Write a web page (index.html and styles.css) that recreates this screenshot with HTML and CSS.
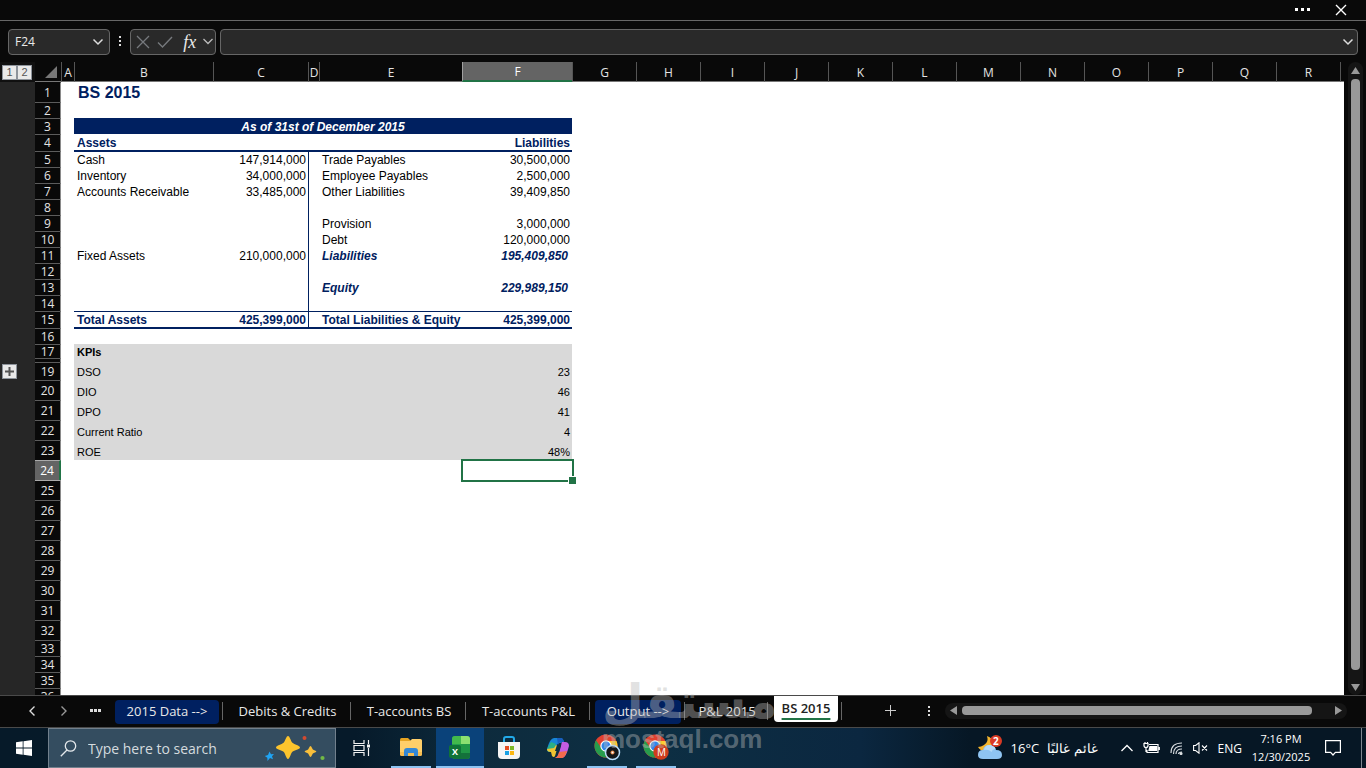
FILE: index.html
```html
<!DOCTYPE html>
<html lang="en">
<head>
<meta charset="utf-8">
<title>BS 2015</title>
<link rel="stylesheet" href="styles.css">
</head>
<body>
<header class="titlebar">
  <button class="plain" aria-label="More options"><svg width="16" height="4" fill="#fff"><rect width="3" height="3" x="0"/><rect width="3" height="3" x="6"/><rect width="3" height="3" x="12"/></svg></button>
  <button class="plain" aria-label="Close"><svg width="12" height="12" stroke="#fff" stroke-width="1.4"><path d="M1 1l10 10M11 1L1 11"/></svg></button>
</header>

<section class="formula-bar">
  <div class="name-box">
    <input type="text" value="F24" aria-label="Name box">
    <button class="plain" aria-label="Open names"><svg width="12" height="8" fill="none" stroke="#ddd" stroke-width="1.5"><path d="M1.500 1.500l4.500 4.500 4.500-4.500"/></svg></button>
  </div>
  <svg class="grip" width="3" height="12" fill="#ddd"><rect width="2" height="2"/><rect y="4" width="2" height="2"/><rect y="8" width="2" height="2"/></svg>
  <div class="fx-box">
    <button class="plain" aria-label="Cancel"><svg width="14" height="14" stroke="#76797d" stroke-width="1.3"><path d="M1 1l12 12M13 1L1 13"/></svg></button>
    <button class="plain" aria-label="Enter"><svg width="16" height="12" fill="none" stroke="#76797d" stroke-width="1.4"><path d="M1 6.500l4.500 4.500L15 1"/></svg></button>
    <button class="plain fx" aria-label="Insert function">fx</button>
    <button class="plain" aria-label="Function list"><svg width="10" height="7" fill="none" stroke="#bbb" stroke-width="1.300"><path d="M.5 1l4.500 4.500L9.500 1"/></svg></button>
  </div>
  <div class="formula-box">
    <input type="text" aria-label="Formula">
    <button class="plain" aria-label="Expand formula bar"><svg width="12" height="8" fill="none" stroke="#ddd" stroke-width="1.5"><path d="M1.500 1.500l4.500 4.500 4.500-4.500"/></svg></button>
  </div>
</section>

<main class="workspace">
  <div class="sheet">
    <table>
      <colgroup>
        <col class="w-gutter"><col class="w-num"><col class="w-a"><col class="w-b"><col class="w-c"><col class="w-d"><col class="w-e"><col class="w-f">
        <col class="w-g"><col class="w-g"><col class="w-g"><col class="w-g"><col class="w-g"><col class="w-g"><col class="w-g"><col class="w-g"><col class="w-g"><col class="w-g"><col class="w-g"><col class="w-g"><col>
      </colgroup>
      <thead>
        <tr>
          <td class="levels"><div><button class="outline">1</button><button class="outline">2</button></div></td>
          <td class="corner"><svg width="12" height="12" fill="#777"><path d="M12 0v12H0z"/></svg></td>
          <th>A</th><th>B</th><th>C</th><th>D</th><th>E</th><th class="on">F</th><th>G</th><th>H</th><th>I</th><th>J</th><th>K</th><th>L</th><th>M</th><th>N</th><th>O</th><th>P</th><th>Q</th><th>R</th><th></th>
        </tr>
      </thead>
      <tbody>
        <tr class="h20"><td class="gut"></td><th>1</th><td></td><td class="title" colspan="18">BS 2015</td></tr>
        <tr class="h16"><td class="gut"></td><th>2</th><td colspan="19"></td></tr>
        <tr class="h16"><td class="gut"></td><th>3</th><td></td><td class="band" colspan="5">As of 31st of December 2015</td><td colspan="13"></td></tr>
        <tr class="h17 strong under"><td class="gut"></td><th>4</th><td></td><td class="cell">Assets</td><td class="cell"></td><td class="cell"></td><td class="cell"></td><td class="cell num">Liabilities</td><td colspan="13"></td></tr>
        <tr class="h16 over"><td class="gut"></td><th>5</th><td></td><td class="cell">Cash</td><td class="cell num">147,914,000</td><td class="cell split"></td><td class="cell">Trade Payables</td><td class="cell num">30,500,000</td><td colspan="13"></td></tr>
        <tr class="h16"><td class="gut"></td><th>6</th><td></td><td class="cell">Inventory</td><td class="cell num">34,000,000</td><td class="split"></td><td class="cell">Employee Payables</td><td class="cell num">2,500,000</td><td colspan="13"></td></tr>
        <tr class="h16"><td class="gut"></td><th>7</th><td></td><td class="cell">Accounts Receivable</td><td class="cell num">33,485,000</td><td class="split"></td><td class="cell">Other Liabilities</td><td class="cell num">39,409,850</td><td colspan="13"></td></tr>
        <tr class="h16"><td class="gut"></td><th>8</th><td></td><td></td><td></td><td class="split"></td><td colspan="15"></td></tr>
        <tr class="h16"><td class="gut"></td><th>9</th><td></td><td></td><td></td><td class="split"></td><td class="cell">Provision</td><td class="cell num">3,000,000</td><td colspan="13"></td></tr>
        <tr class="h16"><td class="gut"></td><th>10</th><td></td><td></td><td></td><td class="split"></td><td class="cell">Debt</td><td class="cell num">120,000,000</td><td colspan="13"></td></tr>
        <tr class="h16"><td class="gut"></td><th>11</th><td></td><td class="cell">Fixed Assets</td><td class="cell num">210,000,000</td><td class="split"></td><td class="cell sub">Liabilities</td><td class="cell num sub">195,409,850</td><td colspan="13"></td></tr>
        <tr class="h16"><td class="gut"></td><th>12</th><td></td><td></td><td></td><td class="split"></td><td colspan="15"></td></tr>
        <tr class="h16"><td class="gut"></td><th>13</th><td></td><td></td><td></td><td class="split"></td><td class="cell sub">Equity</td><td class="cell num sub">229,989,150</td><td colspan="13"></td></tr>
        <tr class="h16"><td class="gut"></td><th>14</th><td></td><td></td><td></td><td class="split"></td><td colspan="15"></td></tr>
        <tr class="h17 strong under over"><td class="gut"></td><th>15</th><td></td><td class="cell">Total Assets</td><td class="cell num">425,399,000</td><td class="cell split"></td><td class="cell">Total Liabilities &amp; Equity</td><td class="cell num">425,399,000</td><td colspan="13"></td></tr>
        <tr class="h16 over"><td class="gut"></td><th>16</th><td></td><td class="cell" colspan="5"></td><td colspan="13"></td></tr>
        <tr class="h14 kpi"><td class="gut"></td><th>17</th><td></td><td class="cell head" colspan="4">KPIs</td><td class="cell"></td><td colspan="13"></td></tr>
        <tr class="h4 kpi"><td class="gut"></td><th></th><td></td><td class="cell" colspan="5"></td><td colspan="13"></td></tr>
        <tr class="h18 kpi"><td class="gut"><button class="outline" aria-label="Expand group"><svg width="9" height="9" stroke="#555" stroke-width="2"><path d="M4.500 0v9M0 4.500h9"/></svg></button></td><th>19</th><td></td><td class="cell" colspan="4">DSO</td><td class="cell num">23</td><td colspan="13"></td></tr>
        <tr class="h20 kpi"><td class="gut"></td><th>20</th><td></td><td class="cell" colspan="4">DIO</td><td class="cell num">46</td><td colspan="13"></td></tr>
        <tr class="h20 kpi"><td class="gut"></td><th>21</th><td></td><td class="cell" colspan="4">DPO</td><td class="cell num">41</td><td colspan="13"></td></tr>
        <tr class="h20 kpi"><td class="gut"></td><th>22</th><td></td><td class="cell" colspan="4">Current Ratio</td><td class="cell num">4</td><td colspan="13"></td></tr>
        <tr class="h20 kpi"><td class="gut"></td><th>23</th><td></td><td class="cell" colspan="4">ROE</td><td class="cell num">48%</td><td colspan="13"></td></tr>
        <tr class="h20"><td class="gut"></td><th class="on">24</th><td colspan="5"></td><td class="selected"></td><td colspan="13"></td></tr>
        <tr class="h20"><td class="gut"></td><th class="after">25</th><td colspan="19"></td></tr>
        <tr class="h20"><td class="gut"></td><th>26</th><td colspan="19"></td></tr>
        <tr class="h20"><td class="gut"></td><th>27</th><td colspan="19"></td></tr>
        <tr class="h20"><td class="gut"></td><th>28</th><td colspan="19"></td></tr>
        <tr class="h20"><td class="gut"></td><th>29</th><td colspan="19"></td></tr>
        <tr class="h20"><td class="gut"></td><th>30</th><td colspan="19"></td></tr>
        <tr class="h20"><td class="gut"></td><th>31</th><td colspan="19"></td></tr>
        <tr class="h20"><td class="gut"></td><th>32</th><td colspan="19"></td></tr>
        <tr class="h16"><td class="gut"></td><th>33</th><td colspan="19"></td></tr>
        <tr class="h16"><td class="gut"></td><th>34</th><td colspan="19"></td></tr>
        <tr class="h16"><td class="gut"></td><th>35</th><td colspan="19"></td></tr>
        <tr class="h16"><td class="gut"></td><th>36</th><td colspan="19"></td></tr>
      </tbody>
    </table>
  </div>
  <div class="vscroll">
    <svg width="9" height="7" fill="#999"><path d="M4.500 0L9 7H0z"/></svg>
    <div class="thumb"></div>
    <svg width="9" height="7" fill="#999"><path d="M0 0h9L4.500 7z"/></svg>
  </div>
</main>

<nav class="tabbar">
  <div class="tabnav">
    <button class="plain" aria-label="Previous sheet"><svg width="8" height="12" fill="none" stroke="#ddd" stroke-width="1.400"><path d="M6.500 1.500L2 6l4.500 4.500"/></svg></button>
    <button class="plain" aria-label="Next sheet"><svg width="8" height="12" fill="none" stroke="#999" stroke-width="1.400"><path d="M1.500 1.500L6 6l-4.500 4.500"/></svg></button>
    <button class="plain" aria-label="All sheets"><svg width="12" height="3" fill="#ddd"><rect width="3" height="3"/><rect x="4" width="3" height="3"/><rect x="8" width="3" height="3"/></svg></button>
  </div>
  <div class="tabs">
    <button class="tab pill"><span>2015 Data --&gt;</span></button>
    <button class="tab"><span>Debits &amp; Credits</span></button>
    <button class="tab"><span>T-accounts BS</span></button>
    <button class="tab"><span>T-accounts P&amp;L</span></button>
    <button class="tab pill"><span>Output --&gt;</span></button>
    <button class="tab"><span>P&amp;L 2015</span></button>
    <button class="tab active"><span>BS 2015</span></button>
  </div>
  <button class="plain add" aria-label="New sheet"><svg width="13" height="13" stroke="#ccc" stroke-width="1"><path d="M6.500 1v11M1 6.500h11"/></svg></button>
  <svg class="grip" width="3" height="12" fill="#ddd"><rect width="2" height="2"/><rect y="4" width="2" height="2"/><rect y="8" width="2" height="2"/></svg>
  <div class="hscroll">
    <svg width="7" height="9" fill="#999"><path d="M7 0v9L0 4.500z"/></svg>
    <div class="thumb"></div>
    <svg width="7" height="9" fill="#999"><path d="M0 0v9l7-4.500z"/></svg>
  </div>
</nav>

<footer class="taskbar">
  <button class="plain start" aria-label="Start"><svg width="16" height="16" fill="#fff"><path d="M0 2.300L6.700 1.300v6.300H0zM7.500 1.200L16 0v7.600H7.500zM0 8.400h6.700v6.300L0 13.700zM7.500 8.400H16V16l-8.500-1.200z"/></svg></button>
  <label class="search">
    <svg width="17" height="17" fill="none" stroke="#e4e8eb" stroke-width="1.300"><circle cx="10.500" cy="6" r="5.200"/><path d="M7 10L.8 16.200"/></svg>
    <input type="text" placeholder="Type here to search">
    <svg width="62" height="26" viewBox="0 0 62 26"><path fill="#fcc42d" d="M24 1c1.800 0 2.700 5 4.400 6.700S36 10.400 36 12.500s-5.900 2.600-7.600 4.300S25.800 24 24 24s-2.700-5.500-4.400-7.200S12 14.600 12 12.500s5.900-3.100 7.600-4.800S22.200 1 24 1z"/><path fill="#f9bf3b" d="M46.500 11c1.100 0 1.500 2.600 2.400 3.500s3.500 1 3.500 2-2.600 1.100-3.500 2-1.300 3.500-2.400 3.500-1.500-2.600-2.400-3.500-3.500-1-3.500-2 2.600-1.100 3.500-2 1.300-3.500 2.400-3.500z"/><path fill="#1fa4f4" d="M5.500 16.500l1.500 2.800 3-.4-2 2.400 1 3-3-1.200L3.500 26l-.2-3.300L.8 21l3.200-1z"/><circle cx="40.500" cy="3" r="2" fill="#d34a30"/><circle cx="58.500" cy="23" r="2.100" fill="#72b945"/></svg>
  </label>
  <div class="apps">
    <button class="app" aria-label="Task view"><svg width="18" height="18" fill="none" stroke="#f2f2f2" stroke-width="1.200"><path d="M1 1v3.500h10V1M1 17v-3.500h10V17M1 6.500h10v5H1zM15.500 1v4M15.500 9v8"/><path fill="#f2f2f2" stroke="none" d="M14 5.500h3v3h-3z"/></svg></button>
    <button class="app open" aria-label="File Explorer"><svg width="22" height="20"><path fill="#e6a422" d="M0 1.500Q0 0 1.500 0H8l3 3H0z"/><path fill="#ffcf6a" d="M0 3h10l2-2h8.500Q22 1 22 2.500V17H0z"/><path fill="#f6bd52" d="M0 14h22v2.500q0 1.500-1.500 1.500h-19Q0 18 0 16.500z"/><path fill="#3488d5" d="M4 18v-5q0-3 3-3h8q3 0 3 3v5h-4v-3H8v3z"/></svg></button>
    <button class="app open current" aria-label="Excel"><svg width="23" height="24"><rect x="3" y="0" width="18" height="23" rx="3" fill="#21a04b"/><path fill="#8ce070" d="M12 0h6q3 0 3 3v5h-9z"/><path fill="#42b94c" d="M6 0h6v8H3V3q0-3 3-3z"/><path fill="#14713b" d="M3 15h18v5q0 3-3 3H6q-3 0-3-3z"/><path fill="#209746" d="M12 8h9v9h-9z"/><rect x="0" y="9" width="12" height="13" rx="2" fill="#107337"/><text x="3" y="19" class="glyph-s">X</text></svg></button>
    <button class="app" aria-label="Store"><svg width="24" height="24"><path fill="none" stroke="#22a9e8" stroke-width="2" d="M7 6V3q0-2 2-2h6q2 0 2 2v3"/><path fill="#f5f5f5" d="M1 6h22v13q0 4-4 4H5q-4 0-4-4z"/><path fill="#e54d22" d="M8 10h4v4H8z"/><path fill="#7db928" d="M13 10h4v4h-4z"/><path fill="#19a1e5" d="M8 15h4v4H8z"/><path fill="#fdb813" d="M13 15h4v4h-4z"/></svg></button>
    <button class="app" aria-label="Copilot"><svg width="24" height="22"><path fill="#1685d8" d="M8 1h7q2 0 3 4l-4 1q-3 0-4 4l-2 5H4q-3 0-3-3Q4 1 8 1z"/><path fill="#2aaf85" d="M5 5l5 2-3 8H4q-3 0-3-3z"/><path fill="#efc332" d="M1 12l7-1 2-3 2 1-3 10q-1 2-3 0l-1-4q-4 0-4-3z"/><path fill="#c45de2" d="M16 5h3q4 0 4 4-3 12-7 12H9q3-1 4-5l2-7q.5-3 1-4z"/><path fill="#f36b4c" d="M21 14q-2 7-5 7H9q3-1 4-6z"/><path fill="#195dbd" d="M11 1h4q2 0 3 4h-3q-2 0-3 3z"/><path fill="#0d2e42" d="M11 8h4l-2 6H9z"/></svg></button>
    <button class="app open" aria-label="Chrome"><svg width="28" height="28"><circle cx="13" cy="12" r="11.500" fill="#e0412f"/><path fill="#ffce31" d="M13 7h10.400A11.500 11.500 0 0 1 13 23.500L18 15z"/><path fill="#279c4d" d="M13 23.500A11.500 11.500 0 0 1 3 6.300L9 15l4 3 2 1z"/><circle cx="13" cy="12" r="5.700" fill="#fff"/><circle cx="13" cy="12" r="4.500" fill="#3286ea"/><circle cx="19.500" cy="18.500" r="7" fill="#15171a" stroke="#b9ddfb" stroke-width="1.500"/><circle cx="19.500" cy="18.500" r="2" fill="#e88443"/><circle cx="19.500" cy="18.500" r="1" fill="#fff"/></svg></button>
    <button class="app open" aria-label="Chrome profile"><svg width="28" height="28"><circle cx="13" cy="12" r="11.500" fill="#e0412f"/><path fill="#ffce31" d="M13 7h10.400A11.500 11.500 0 0 1 13 23.500L18 15z"/><path fill="#279c4d" d="M13 23.500A11.500 11.500 0 0 1 3 6.300L9 15l4 3 2 1z"/><circle cx="13" cy="12" r="5.700" fill="#fff"/><circle cx="13" cy="12" r="4.500" fill="#3286ea"/><circle cx="19" cy="18" r="7.700" fill="#cf3d1c"/><text x="15" y="22" class="glyph-m">M</text></svg></button>
  </div>
  <div class="tray">
    <button class="plain weather"><svg width="26" height="26"><path fill="#f4b52d" d="M10 1q2 6-3 9-3 2-6 2 3 5 8 4 7-1 7-8 0-5-6-7z"/><path fill="#8fc4f2" d="M6 24q-5 0-5-4 0-5 5-5 1-5 6.500-5t6.500 5q6 0 6 5 0 4-5 4z"/><path fill="#b5daf8" d="M7 15q1-5 5.500-5t6 4q-3 0-4 3-3-3-7.500-2z"/><circle cx="19" cy="6" r="6" fill="#d93a25"/><text x="16" y="10" class="glyph-n">2</text></svg><span>16°C</span><span lang="ar" dir="rtl">غائم غالبًا</span></button>
    <button class="plain" aria-label="Hidden icons"><svg width="12" height="8" fill="none" stroke="#fff" stroke-width="1.300"><path d="M.5 7L6 1.500 11.500 7"/></svg></button>
    <button class="plain" aria-label="Battery"><svg width="17" height="12" fill="none" stroke="#fff" stroke-width="1.200"><path d="M6 2.500h9v8H4V8M16.300 5v3M1 1.500v2q0 2 2 2t2-2v-2zM2 0v1M4.500 0v1M3 5v5"/><path fill="#fff" d="M7 4.500h6.500v4H6z"/></svg></button>
    <button class="plain" aria-label="Network"><svg width="13" height="13" fill="none" stroke="#d5dade" stroke-width="1.200"><path d="M1 11Q1 1 12 1M3.500 12Q3.500 4 12 4M6 12Q6 7 12 7M8.500 12Q8.500 10 12 10"/><circle cx="11" cy="11.500" r="1" fill="#fff"/></svg></button>
    <button class="plain" aria-label="Muted"><svg width="15" height="12" fill="none" stroke="#fff" stroke-width="1.100"><path d="M.6 3.500h2L6 .8v10.400L2.600 8.500h-2zM9 3.500l5 5M14 3.500l-5 5"/></svg></button>
    <button class="plain lang">ENG</button>
    <button class="plain clock"><span>7:16 PM</span><span>12/30/2025</span></button>
    <button class="plain notice" aria-label="Notifications"><svg width="16" height="16" fill="none" stroke="#fff" stroke-width="1.200"><path d="M.6.6h14.800v11.800h-5L8 15l-2.400-2.600h-5z"/></svg></button>
  </div>
</footer>

<div class="watermark"><span class="mark" lang="ar" dir="rtl">مستقل</span><span class="site">mostaql.com</span></div>
</body>
</html>
```
FILE: styles.css
```css
* { box-sizing: border-box; }
body {
  margin: 0;
  height: 100vh;
  display: flex;
  flex-direction: column;
  overflow: hidden;
  background: #090909;
  color: #e8e8e8;
  font: 13px "Open Sans", "Noto Sans", sans-serif;
}
button, input { font: inherit; color: inherit; }
svg { display: block; flex: none; }
.plain, .tab, .app {
  display: flex;
  align-items: center;
  justify-content: center;
  padding: 0;
  border: 0;
  background: none;
}

/* Title and formula bars */
.titlebar {
  flex: none;
  height: 21px;
  display: flex;
  align-items: center;
  justify-content: flex-end;
  gap: 24px;
  padding-right: 19px;
  border-bottom: 1px solid #676767;
}
.formula-bar {
  flex: none;
  height: 41px;
  display: flex;
  align-items: center;
  padding: 0 8px;
}
.name-box, .fx-box, .formula-box {
  height: 26px;
  display: flex;
  align-items: center;
  border: 1px solid #666;
  border-radius: 4px;
  background: #292929;
}
.name-box { width: 102px; padding: 0 5px 0 6px; font-size: 12px; }
.fx-box { width: 86px; margin-right: 4px; padding: 0 2px 0 5px; justify-content: space-between; }
.formula-box { flex: 1; padding: 0 3px 0 8px; }
.name-box input, .formula-box input {
  flex: 1;
  min-width: 0;
  padding: 0;
  border: 0;
  outline: 0;
  background: none;
}
.grip { margin: 0 8px 0 9px; }
.fx { padding-left: 4px; font: italic 18px/20px "Liberation Serif", serif; }

/* Worksheet */
.workspace { flex: 1; min-height: 0; display: flex; }
.sheet { flex: 1; min-width: 0; overflow: hidden; background: #fff; }
table {
  width: 100%;
  table-layout: fixed;
  border-collapse: separate;
  border-spacing: 0;
  color: #000;
  font: 12px/14px "Liberation Sans", Arial, sans-serif;
}
.w-gutter { width: 35px; }
.w-num { width: 26px; }
.w-a { width: 13px; }
.w-b { width: 139px; }
.w-c { width: 95px; }
.w-d { width: 11px; }
.w-e { width: 143px; }
.w-f { width: 110px; }
.w-g { width: 64px; }
td, th { padding: 0; }
th { color: #e4e4e4; background: #090909; font: 12px/14px "Open Sans", "Noto Sans", sans-serif; }
thead tr { height: 20px; }
thead th { padding-top: 2px; border-left: 1px solid #555; border-bottom: 1px solid #777; }
thead th.on { background: #646464; border-color: #a0a0a0; border-bottom: 2px solid #217346; color: #fff; }
.levels, .corner { background: #101010; }
.corner { background: #090909; border-bottom: 1px solid #777; }
.corner svg { margin-left: 10px; }
.levels div { display: flex; padding-left: 2px; }
.outline {
  width: 15px;
  height: 15px;
  display: flex;
  align-items: center;
  justify-content: center;
  padding: 0;
  border: 1px solid #8d939b;
  background: #e9e9e9;
  color: #555;
  font-size: 11px;
  line-height: 13px;
}
.gut { background: #262626; vertical-align: middle; }
.gut .outline { margin-left: 2px; }
tbody th { border-top: 1px solid #5c5c5c; border-right: 1px solid #8a8a8a; }
tbody tr:first-child th { border-top-color: #090909; }
tbody th.on { background: #646464; border-top-color: #aaa; border-right: 2px solid #217346; color: #fff; }
tbody th.after { border-top-color: #aaa; }
.h4 { height: 4px; }
.h14 { height: 14px; }
.h14 th { line-height: 12px; }
.h16 { height: 16px; }
.h17 { height: 17px; }
.h18 { height: 18px; }
.h20 { height: 20px; }
.cell { padding-left: 3px; vertical-align: bottom; white-space: nowrap; }
.num { padding-right: 2px; text-align: right; }
.title { padding: 2px 0 0 4px; color: #002060; font-size: 16px; line-height: 18px; font-weight: bold; }
.band { padding-top: 1px; background: #002060; color: #fff; font-weight: bold; font-style: italic; text-align: center; }
.strong .cell { color: #002060; font-weight: bold; }
.sub { color: #002060; font-weight: bold; font-style: italic; }
.num.sub { padding-right: 4px; }
.under .cell { border-bottom: 1px solid #002060; }
.over .cell { border-top: 1px solid #002060; }
.split { border-left: 1px solid #002060; }
.kpi .cell { background: #d9d9d9; font-size: 11px; }
.h18 .cell, .h20 .cell { padding-bottom: 1px; }
.kpi .head { font-weight: bold; line-height: 12px; }
.kpi.h4 .cell { line-height: 4px; }
.selected { position: relative; }
.selected::before {
  content: "";
  position: absolute;
  inset: -1px -2px -2px -1px;
  border: 2px solid #217346;
}
.selected::after {
  content: "";
  position: absolute;
  right: -4px;
  bottom: -4px;
  width: 7px;
  height: 7px;
  border: solid #fff;
  border-width: 1px 0 0 1px;
  background: #217346;
}
.vscroll {
  width: 15px;
  margin: 0 3px 0 4px;
  padding: 5px 0 4px;
  display: flex;
  flex-direction: column;
  align-items: center;
  gap: 5px;
  border-radius: 8px;
  background: #151515;
}
.vscroll .thumb { flex: 1; width: 9px; margin-bottom: 9px; border-radius: 4px; background: #999; }

/* Sheet tabs */
.tabbar {
  flex: none;
  height: 33px;
  display: flex;
  align-items: center;
  border-top: 1px solid #4a4a4a;
  border-bottom: 1px solid #4a4a4a;
}
.tabnav { width: 111px; display: flex; align-items: center; gap: 24px; padding: 0 8px 2px 28px; }
.tabnav .plain:last-child { margin-left: -2px; }
.tabs {
  height: 100%;
  display: grid;
  grid-template-columns: 113px 128px 115px 124px 95px 83px 74px;
}
.tab { position: relative; padding: 0 4px; border-right: 1px solid #090909; white-space: nowrap; }
.tab::after { content: ""; position: absolute; right: 0; top: 6px; height: 18px; border-right: 1px solid #666; }
.tab span { height: 24px; line-height: 23px; }
.tab.pill span { flex: 1; border-radius: 4px; background: #002060; }
.tab.active { align-items: flex-start; padding-left: 5px; }
.tab.active span {
  flex: 1;
  height: 26px;
  border-radius: 0 0 4px 4px;
  background: #fff;
  color: #222;
  font-weight: 600;
  line-height: 24px;
  text-decoration: underline 2px #217346;
  text-underline-offset: 5px;
}
.add { width: 24px; margin: 0 0 2px 35px; }
.tabbar .grip { margin: 0 14px 0 26px; }
.hscroll {
  flex: 1;
  height: 16px;
  margin: 0 19px 2px 0;
  padding: 0 5px;
  display: flex;
  align-items: center;
  gap: 5px;
  border-radius: 8px;
  background: #151515;
}
.hscroll .thumb { flex: 1; height: 9px; margin-right: 18px; border-radius: 4px; background: #999; }

/* Taskbar */
.taskbar {
  flex: none;
  height: 40px;
  display: flex;
  background: linear-gradient(90deg, #061a29 0%, #061a2a 26%, #0d2b3d 35%, #0d2f43 47%, #0b2740 63%, #061725 71%, #061725 100%);
}
.start { width: 48px; }
.search {
  width: 288px;
  display: flex;
  align-items: center;
  padding: 0 9px 0 11px;
  border: 1px solid #71808d;
  background: #344d60;
}
.search input { flex: 1; min-width: 0; padding: 0 0 0 11px; border: 0; outline: 0; background: none; font-size: 14px; }
.search input::placeholder { color: #d5dbdf; opacity: 1; }
.apps { display: grid; grid-template-columns: repeat(7, 49px); margin-left: 1px; }
.app { position: relative; }
.app.open::after { content: ""; position: absolute; left: 5px; right: 4px; bottom: 0; height: 2px; background: #8dc3f2; }
.app.current { margin-left: 1px; background: #0a427a; }
.app.current::after { left: 0; right: 0; }
.tray { margin-left: auto; display: flex; align-items: center; gap: 10px; padding-right: 4px; color: #fff; }
.tray span { white-space: nowrap; }
.weather { gap: 8px; margin-right: 13px; }
.lang { font-size: 12px; }
.clock { width: 58px; flex-direction: column; font-size: 11px; line-height: 18px; }
.notice { width: 48px; height: 100%; margin-left: -6px; padding-right: 9px; border-right: 1px solid #7d8790; }
.glyph-s { fill: #fff; font: bold 9px "Open Sans", sans-serif; }
.glyph-m { fill: #fff; font: 10px "Open Sans", sans-serif; }
.glyph-n { fill: #fff; font: bold 10px "Open Sans", sans-serif; }

/* Watermark laid over the window */
.watermark {
  position: absolute;
  left: 602px;
  bottom: 14px;
  display: flex;
  flex-direction: column;
  align-items: flex-start;
  pointer-events: none;
  color: rgba(186, 186, 186, 0.43);
  font-weight: bold;
}
.mark { font: bold 48px/46px "DejaVu Sans", sans-serif; }
.site { font: bold 26px/30px "Liberation Sans", sans-serif; }
```
